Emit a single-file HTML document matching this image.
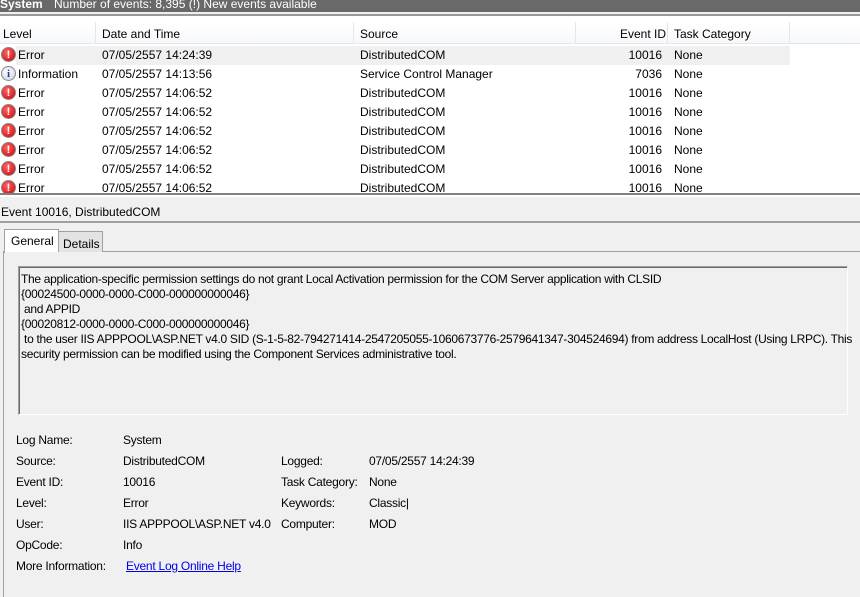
<!DOCTYPE html>
<html><head><style>
*{margin:0;padding:0;box-sizing:border-box}
body{width:860px;height:597px;overflow:hidden;background:#f0f0f0;font-family:"Liberation Sans",sans-serif;font-size:12px;color:#000;position:relative}
.a{position:absolute;white-space:nowrap}
.top{position:absolute;left:0;top:0;width:860px;height:12px;background:#696969;color:#fff}
.list{position:absolute;left:0;top:14px;width:860px;height:180px;background:#fff;border-top:2px solid #9a9a9a;overflow:hidden}
.hdr{position:absolute;top:6px;height:22px;border-right:1px solid #e3e6ea;border-bottom:1px solid #e3e6ea;background:linear-gradient(#fff,#f7f8fa)}
.row{position:absolute;left:0;width:790px;height:19px}
.ico{position:absolute;left:1px;width:15px;height:15px;border-radius:50%;color:#fff;font-weight:bold;font-size:11px;text-align:center;line-height:15px;border:1px solid #888}
.err{background:radial-gradient(circle at 40% 35%,#f66,#c00)}
.inf{background:radial-gradient(circle at 40% 35%,#fff,#ccd);color:#1a3fa8;font-family:"Liberation Serif",serif}
.d span{letter-spacing:-0.25px}
</style></head><body>
<div class="top"><span class="a" style="left:0;top:-3px;font-weight:bold">System</span><span class="a" style="left:54px;top:-3px">Number of events: 8,395 (!) New events available</span></div>
<div class="list">
<div class="hdr" style="left:0;width:96px"></div>
<div class="hdr" style="left:96px;width:258px"></div>
<div class="hdr" style="left:354px;width:222px"></div>
<div class="hdr" style="left:576px;width:92px"></div>
<div class="hdr" style="left:668px;width:122px"></div>
<div class="hdr" style="left:790px;width:70px;border-right:none"></div>
<span class="a" style="left:3px;top:11px">Level</span>
<span class="a" style="left:102px;top:11px">Date and Time</span>
<span class="a" style="left:360px;top:11px">Source</span>
<span class="a" style="left:620px;top:11px">Event ID</span>
<span class="a" style="left:674px;top:11px">Task Category</span>
<div class="row" style="top:30px;background:#f0f0f0;left:16px;width:774px"></div>
</div>
<div id="rows"></div>
<script>
var r=[["Error","07/05/2557 14:24:39","DistributedCOM","10016"],["Information","07/05/2557 14:13:56","Service Control Manager","7036"]];
for(var i=0;i<6;i++)r.push(["Error","07/05/2557 14:06:52","DistributedCOM","10016"]);
var h="";r.forEach(function(x,i){var y=46+i*19;var e=x[0]=="Error";
h+='<div class="ico '+(e?'err':'inf')+'" style="top:'+(y+1)+'px">'+(e?'!':'i')+'</div>';
h+='<span class="a" style="left:18px;top:'+(y+2)+'px">'+x[0]+'</span><span class="a" style="left:102px;top:'+(y+2)+'px">'+x[1]+'</span><span class="a" style="left:360px;top:'+(y+2)+'px">'+x[2]+'</span><span class="a" style="right:198px;top:'+(y+2)+'px">'+x[3]+'</span><span class="a" style="left:674px;top:'+(y+2)+'px">None</span>';});
document.getElementById('rows').innerHTML=h;
</script>
<div class="a" style="left:0;top:193px;width:860px;height:2px;background:#808080"></div>
<div class="a" style="left:0;top:195px;width:860px;height:2px;background:#fff"></div>
<span class="a" style="left:1px;top:205px">Event 10016, DistributedCOM</span>
<div class="a" style="left:0;top:221px;width:860px;height:2px;background:#a0a0a0"></div>
<div class="a" style="left:3px;top:251px;width:857px;height:346px;border-left:1px solid #a0a0a0;border-top:1px solid #a0a0a0;background:#f0f0f0"></div>
<div class="a" style="left:58px;top:231px;width:45px;height:21px;border:1px solid #a0a0a0;border-bottom:none;background:#e3e3e3"></div>
<span class="a" style="left:63px;top:237px">Details</span>
<div class="a" style="left:4px;top:229px;width:55px;height:24px;border:1px solid #a0a0a0;border-bottom:none;background:#fff"></div>
<span class="a" style="left:11px;top:234px">General</span>
<div class="a" style="left:6px;top:252px;width:853px;height:345px;background:#f0f0f0"></div>
<div class="a" style="left:18px;top:266px;width:830px;height:149px;border:1px solid;border-color:#a0a0a0 #fff #fff #a0a0a0;box-shadow:inset 1px 1px 0 #696969"></div>
<div class="a" style="left:21px;top:272px;line-height:15px;font-size:12px;letter-spacing:-0.3px">The application-specific permission settings do not grant Local Activation permission for the COM Server application with CLSID<br>{00024500-0000-0000-C000-000000000046}<br>&nbsp;and APPID<br>{00020812-0000-0000-C000-000000000046}<br>&nbsp;to the user IIS APPPOOL\ASP.NET v4.0 SID (S-1-5-82-794271414-2547205055-1060673776-2579641347-304524694) from address LocalHost (Using LRPC). This<br>security permission can be modified using the Component Services administrative tool.</div>
<div class="d">
<span class="a" style="left:16px;top:433px">Log Name:</span><span class="a" style="left:123px;top:433px">System</span>
<span class="a" style="left:16px;top:454px">Source:</span><span class="a" style="left:123px;top:454px">DistributedCOM</span>
<span class="a" style="left:281px;top:454px">Logged:</span><span class="a" style="left:369px;top:454px">07/05/2557 14:24:39</span>
<span class="a" style="left:16px;top:475px">Event ID:</span><span class="a" style="left:123px;top:475px">10016</span>
<span class="a" style="left:281px;top:475px">Task Category:</span><span class="a" style="left:369px;top:475px">None</span>
<span class="a" style="left:16px;top:496px">Level:</span><span class="a" style="left:123px;top:496px">Error</span>
<span class="a" style="left:281px;top:496px">Keywords:</span><span class="a" style="left:369px;top:496px">Classic|</span>
<span class="a" style="left:16px;top:517px">User:</span><span class="a" style="left:123px;top:517px">IIS APPPOOL\ASP.NET v4.0</span>
<span class="a" style="left:281px;top:517px">Computer:</span><span class="a" style="left:369px;top:517px">MOD</span>
<span class="a" style="left:16px;top:538px">OpCode:</span><span class="a" style="left:123px;top:538px">Info</span>
<span class="a" style="left:16px;top:559px">More Information:</span><span class="a" style="left:126px;top:559px;color:#0000ee;text-decoration:underline">Event Log Online Help</span>
</div>
</body></html>
